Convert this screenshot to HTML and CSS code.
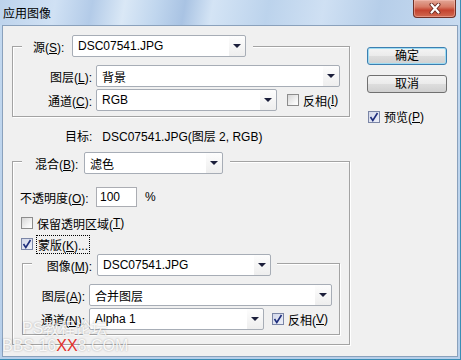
FILE: index.html
```html
<!DOCTYPE html>
<html lang="zh-CN">
<head>
    <meta charset="UTF-8">
    <meta name="viewport" content="width=device-width, initial-scale=1.0">
    <title>应用图像</title>
    <link rel="stylesheet" href="styles.css">
</head>
<body>

<div class="window">
    <div class="titlebar">
        <span class="title">应用图像</span>
        <div class="close">
            <svg width="16" height="11" viewBox="0 0 16 11">
                <path d="M4.5 1.5 L11.5 9.5 M11.5 1.5 L4.5 9.5" stroke="#6b2a22" stroke-width="4" stroke-linecap="round"/>
                <path d="M4.5 1.5 L11.5 9.5 M11.5 1.5 L4.5 9.5" stroke="#fff" stroke-width="2.2" stroke-linecap="round"/>
            </svg>
        </div>
    </div>

    <div class="client">
        <div class="main">
            <div class="group source">
                <div class="group-head">
                    <span class="head-lbl src">源(<u>S</u>):</span>
                    <div class="select w174">DSC07541.JPG</div>
                </div>
                <div class="row">
                    <span class="lbl">图层(<u>L</u>):</span>
                    <div class="select w244">背景</div>
                </div>
                <div class="row tight">
                    <span class="lbl">通道(<u>C</u>):</span>
                    <div class="select w181">RGB</div>
                    <span class="check gap10"><span class="box"></span>反相(<u>I</u>)</span>
                </div>
            </div>

            <div class="target">目标:<span class="target-val">DSC07541.JPG(图层 2, RGB)</span></div>

            <div class="group blend">
                <div class="group-head blend-head">
                    <span class="head-lbl mix">混合(<u>B</u>):</span>
                    <div class="select w139">滤色</div>
                </div>
                <div class="opacity">
                    <span class="opacity-lbl">不透明度(<u>O</u>):</span>
                    <div class="input">100</div>
                    <span class="pct">%</span>
                </div>
                <div class="check-row first">
                    <span class="check"><span class="box"></span>保留透明区域(<u>T</u>)</span>
                </div>
                <div class="check-row">
                    <span class="check"><span class="box on"><svg width="10" height="10" viewBox="0 0 10 10"><path d="M1.5 5 L3.8 8.5 L8.5 1" fill="none" stroke="#1d2d7c" stroke-width="1.6"/></svg></span><span class="focus">蒙版(<u>K</u>)...</span></span>
                </div>

                <div class="group mask">
                    <div class="group-head blend-head mask-head">
                        <span class="head-lbl img">图像(<u>M</u>):</span>
                        <div class="select w174">DSC07541.JPG</div>
                    </div>
                    <div class="row">
                        <span class="lbl small">图层(<u>A</u>):</span>
                        <div class="select w243">合并图层</div>
                    </div>
                    <div class="row tight">
                        <span class="lbl small">通道(<u>N</u>):</span>
                        <div class="select w175">Alpha 1</div>
                        <span class="check gap8"><span class="box on"><svg width="10" height="10" viewBox="0 0 10 10"><path d="M1.5 5 L3.8 8.5 L8.5 1" fill="none" stroke="#1d2d7c" stroke-width="1.6"/></svg></span>反相(<u>V</u>)</span>
                    </div>
                </div>
            </div>
        </div>

        <div class="side">
            <div class="btn default">确定</div>
            <div class="btn">取消</div>
            <span class="check preview"><span class="box on"><svg width="10" height="10" viewBox="0 0 10 10"><path d="M1.5 5 L3.8 8.5 L8.5 1" fill="none" stroke="#1d2d7c" stroke-width="1.6"/></svg></span>预览(<u>P</u>)</span>
        </div>
    </div>

    <div class="watermark">
        <div class="wm-top">PS教程论坛</div>
        <div class="wm-bottom">BBS.16<span class="wm-red">XX</span>8.COM</div>
    </div>
</div>

</body>
</html>
```

FILE: styles.css
```css
* {box-sizing: border-box; margin: 0; padding: 0;}
body {width: 461px; height: 360px; overflow: hidden; font: 12px "Liberation Sans", "Noto Sans CJK SC", sans-serif; color: #000; background: #bcd4ee;}
u {text-decoration: underline;}

/* window frame */
.window {position: relative; width: 461px; height: 360px; display: flex; flex-direction: column; background: linear-gradient(180deg, #c3d9f0, #b7cfea); border-right: 1px solid #3a8db5; border-bottom: 1px solid #3a8db5;}
.titlebar {height: 25px; flex: none; display: flex; align-items: center; background: linear-gradient(100deg, #bdd3ec 0%, #d0e1f4 12%, #b3cbe8 20%, #dae8f6 27%, #c0d6ee 34%, #a9c3e3 40%, #d4e4f5 46%, #bcd3ec 58%, #cfe0f3 70%, #b6cee9 82%, #c8dbf0 100%);}
.title {margin-left: 3px; font-size: 12px; color: #000;}
.close {align-self: flex-start; margin-left: auto; margin-right: 4px; width: 43px; height: 18px; display: flex; align-items: center; justify-content: center; border: 1px solid #6e3128; border-top: none; border-radius: 0 0 4px 4px; background: linear-gradient(180deg, #e2a797 0%, #d77b66 40%, #c4432f 60%, #d06a51 100%); box-shadow: inset 0 0 0 1px rgba(255, 200, 190, 0.45);}

.client {flex: 1; display: flex; margin: 0 2px 2px 2px; padding-left: 9px; border: 1px solid #8aa1bc; background: #f0f0f0;}
.main {width: 338px; padding-top: 20px;}
.side {margin-left: 17px; padding-top: 21px; display: flex; flex-direction: column; align-items: flex-start;}

/* group boxes */
.group {border: 1px solid #a3a3a3; box-shadow: inset 1px 1px 0 #fff, 1px 1px 0 #fff;}
.group-head {display: flex; align-items: center; width: fit-content; height: 22px; margin: -12px 0 0 9px; padding: 0 7px 0 11px; background: #f0f0f0;}
.source {padding-bottom: 5px;}
.head-lbl.src {width: 35px; margin-right: 4px;}
.blend {margin-top: 16px; padding-bottom: 9px;}
.blend-head {margin-top: -10px; padding-left: 13px;}
.head-lbl.mix {width: 44px; margin-right: 5px;}
.mask {width: 318px; margin: 12px 0 0 9px; padding-bottom: 4px;}
.mask-head {padding: 0 6px 0 11px;}
.head-lbl.img {width: 49px; margin-right: 5px; text-align: right;}

.row {display: flex; align-items: center; height: 22px; margin-top: 8px;}
.row.tight {margin-top: 2px;}
.lbl {width: 79px; margin-right: 4px; text-align: right;}
.lbl.small {width: 62px;}

/* controls */
.select {display: flex; align-items: center; height: 22px; padding-left: 5px; border: 1px solid #a7adb6; border-radius: 2px; background: linear-gradient(180deg, #fdfdfd, #eeeeee) right / 16px 100% no-repeat, #fff; white-space: nowrap;}
.select::after {content: ""; margin-left: auto; margin-right: 4px; border-left: 4px solid transparent; border-right: 4px solid transparent; border-top: 4px solid #1b1e3a;}
.w174 {width: 174px;}
.w244 {width: 244px;}
.w181 {width: 181px;}
.w139 {width: 139px;}
.w243 {width: 243px;}
.w175 {width: 175px;}

.check {display: flex; align-items: center; white-space: nowrap;}
.gap10 {margin-left: 10px;}
.gap8 {margin-left: 8px;}
.box {width: 12px; height: 12px; margin-right: 4px; display: flex; align-items: center; justify-content: center; border: 1px solid #8c8c8c; background: linear-gradient(135deg, #d6d6d6, #f6f6f6 70%, #fff);}
.box.on {border-color: #7b86a6; background: linear-gradient(135deg, #d3d8ea, #eceff8);}
.focus {outline: 1px dotted #000; padding: 0 1px;}

.target {margin-top: 12px; height: 16px; line-height: 16px; padding-left: 53px;}
.target-val {margin-left: 10px;}

.opacity {display: flex; align-items: center; height: 20px; margin-top: 13px; padding-left: 7px;}
.opacity-lbl {width: 70px; margin-right: 6px; white-space: nowrap;}
.input {width: 41px; height: 20px; line-height: 18px; padding-left: 3px; border: 1px solid #abadb3; background: #fff;}
.pct {margin-left: 8px;}
.check-row {display: flex; align-items: center; height: 14px; margin-top: 7px; padding-left: 8px;}
.check-row.first {margin-top: 9px;}

.btn {width: 80px; height: 18px; line-height: 16px; text-align: center; border: 1px solid #707070; border-radius: 3px; background: linear-gradient(180deg, #f4f4f4 0%, #ebebeb 48%, #dddddd 52%, #d0d0d0 100%);}
.btn + .btn {margin-top: 10px;}
.btn.default {border-color: #3c7fb1; box-shadow: inset 0 0 0 1px #9fdcf2;}
.preview {margin: 15px 0 0 1px;}

/* watermark over the bottom-left corner */
.watermark {position: absolute; left: 2px; top: 320px; line-height: 17px; font-size: 16px; color: rgba(255, 255, 255, 0.88); text-shadow: 0 0 2px rgba(0, 0, 0, 0.3);}
.wm-top {margin-left: 20px;}
.wm-red {color: #e2302c; text-shadow: none;}
```
